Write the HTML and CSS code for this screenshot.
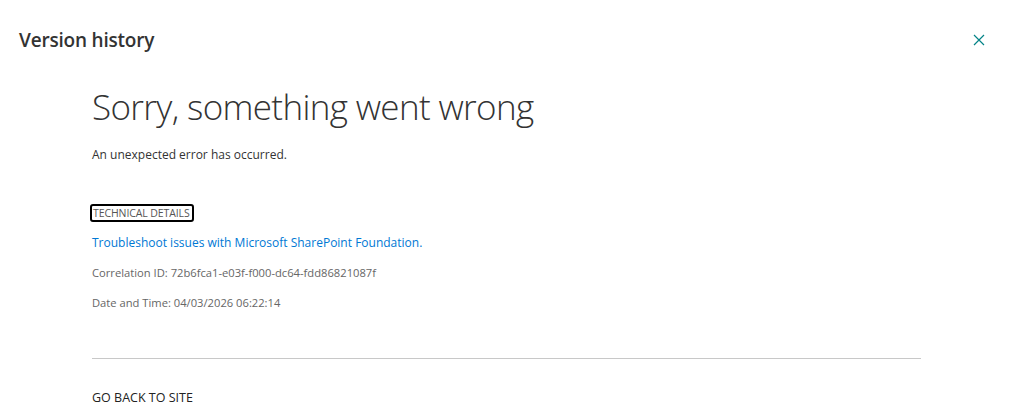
FILE: index.html
```html
<!DOCTYPE html>
<html lang="en">
<head>
<meta charset="utf-8">
<title>Version history</title>
<link rel="stylesheet" href="styles.css">
</head>
<body>
<div class="panel">
  <header class="panel-header">
    <h1 class="panel-title">Version history</h1>
    <button class="close-btn" aria-label="Close">
      <svg width="12" height="12" viewBox="0 0 12 12"><path d="M1 1L11 11M11 1L1 11" stroke="#038387" stroke-width="1.2" fill="none"/></svg>
    </button>
  </header>
  <main class="error">
    <h2 class="error-title">Sorry, something went wrong</h2>
    <p class="error-msg">An unexpected error has occurred.</p>
    <div class="details">
      <button class="details-toggle">TECHNICAL DETAILS</button>
      <a class="details-link" href="#">Troubleshoot issues with Microsoft SharePoint Foundation.</a>
      <p class="details-meta">Correlation ID: 72b6fca1-e03f-f000-dc64-fdd86821087f</p>
      <p class="details-meta">Date and Time: 04/03/2026 06:22:14</p>
    </div>
    <hr class="divider">
    <a class="back-link" href="#">GO BACK TO SITE</a>
  </main>
</div>
</body>
</html>
```
FILE: styles.css
```css
* { box-sizing: border-box; }
html, body { margin: 0; padding: 0; background: #fff; }
body { font-family: "Open Sans", "Noto Sans", sans-serif; color: #333; overflow: hidden; }
.panel { width: 1015px; height: 415px; }
.panel-header {
  display: flex; align-items: center; justify-content: space-between;
  padding: 26px 30px 0 19px; height: 54px;
}
.panel-title { margin: 0; font-size: 19px; font-weight: 600; color: #333; letter-spacing: -0.2px; }
.close-btn { border: 0; background: none; padding: 0; width: 12px; height: 12px; display: flex; margin-top: 0; }
.error { padding: 30px 0 0 92px; width: 921px; }
.error-title { margin: 0; font-size: 35px; font-weight: 300; color: #333; letter-spacing: -0.65px; line-height: 46px; }
.error-msg { margin: 16px 0 0; font-size: 12px; color: #333; line-height: 17px; }
.details { display: flex; flex-direction: column; align-items: flex-start; margin-top: 41px; }
.details-toggle {
  font-family: inherit; font-size: 10.5px; color: #555; background: none;
  border: 2px solid #000; border-radius: 3px; padding: 0 2px 0 1px; margin-left: -2px; line-height: 14px; letter-spacing: -0.1px;
}
.details-link { margin-top: 12px; font-size: 12px; color: #0078d4; text-decoration: none; line-height: 17px; }
.details-meta { margin: 13px 0 0; font-size: 11.2px; color: #666; line-height: 17px; }
.divider { border: 0; border-top: 1px solid #c8c8c8; margin: 47px 0 0; }
.back-link { display: inline-block; margin-top: 30px; font-size: 12.5px; color: #222; text-decoration: none; }
```
